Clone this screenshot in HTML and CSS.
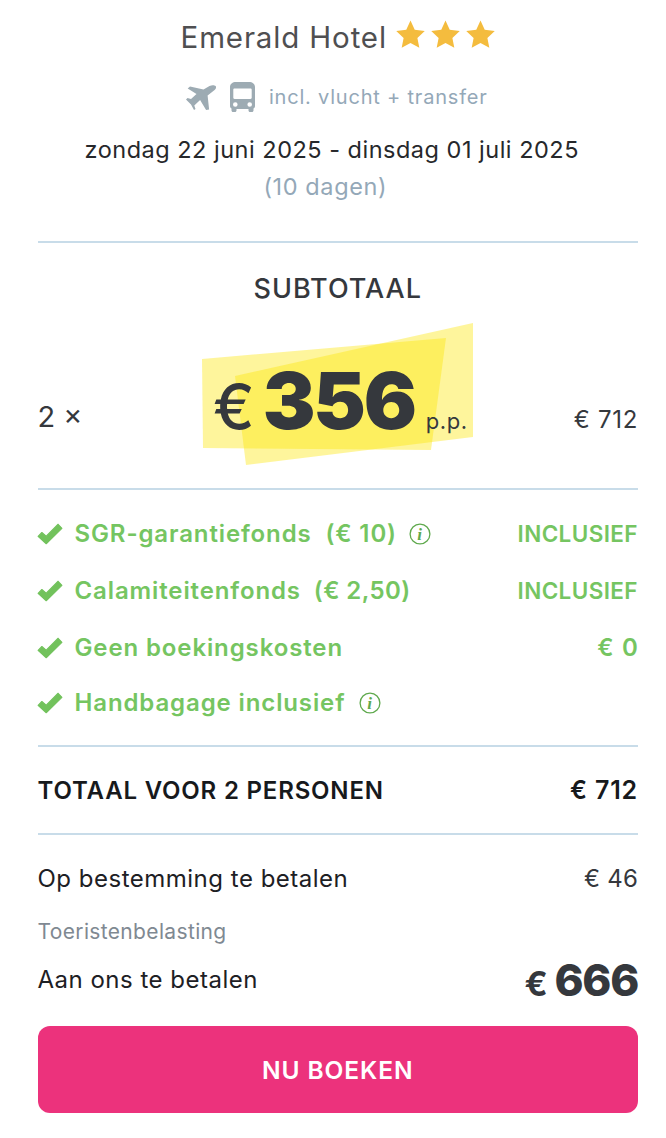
FILE: index.html
```html
<!DOCTYPE html>
<html lang="nl">
<head>
<meta charset="utf-8">
<title>Emerald Hotel</title>
<link rel="stylesheet" href="styles.css">
</head>
<body>
<main class="summary">
  <header class="head">
    <h1 class="hotel">
      <span>Emerald Hotel</span>
      <span class="stars">
        <svg class="star" viewBox="0 0 24 24"><path d="M12 .5l3.5 7.6 8.3 1-6.1 5.7 1.6 8.2L12 19l-7.3 4 1.6-8.2L.2 9.100l8.300-1z"/></svg>
        <svg class="star" viewBox="0 0 24 24"><path d="M12 .5l3.5 7.6 8.3 1-6.1 5.7 1.600 8.200L12 19l-7.300 4 1.600-8.200L.2 9.100l8.300-1z"/></svg>
        <svg class="star" viewBox="0 0 24 24"><path d="M12 .5l3.500 7.600 8.300 1-6.100 5.700 1.600 8.200L12 19l-7.300 4 1.600-8.200L.2 9.100l8.300-1z"/></svg>
      </span>
    </h1>
    <div class="transport">
      <svg class="plane" viewBox="0 0 30 25"><path d="M29.600 1c1 1.200.3 3-1 4l-7 5.500 1.500 14-3 .5-6-10-5.800 5.500 1.200 3.500L8 25l-3-5.500-5-5L1.500 13l3.500 1 5.500-5-8.800-5.500L4 1.500l13.500 3 6-3.500c2.200-1.200 5-1 6.100 0z"/></svg>
      <svg class="bus" viewBox="0 0 25 30"><path fill-rule="evenodd" d="M6 0h13c3.500 0 6 2 6 5v19c0 1.200-.5 2-1.500 2.500v2c0 .8-.7 1.500-1.500 1.500h-2c-.8 0-1.500-.7-1.500-1.500V27H6.500v1.500C6.500 29.300 5.800 30 5 30H3c-.8 0-1.500-.7-1.500-1.500v-2C.5 26 0 25.200 0 24V5C0 2 2.500 0 6 0zM4.500 6.500c-.7 0-1.200.5-1.200 1.200v8c0 .7.500 1.200 1.200 1.200h16c.7 0 1.200-.5 1.200-1.200v-8c0-.7-.5-1.200-1.200-1.200zM5.300 20.200a2.300 2.300 0 1 0 0 4.600 2.300 2.300 0 0 0 0-4.600zm14.400 0a2.300 2.300 0 1 0 0 4.600 2.300 2.300 0 0 0 0-4.600z"/></svg>
      <span>incl. vlucht + transfer</span>
    </div>
    <p class="dates">zondag 22 juni 2025 - dinsdag 01 juli 2025</p>
    <p class="days">(10 dagen)</p>
  </header>

  <section class="subtotal">
    <h2 class="sub-title">SUBTOTAAL</h2>
    <div class="price-row">
      <span class="qty">2 ×</span>
      <div class="price">
        <svg class="splash" viewBox="0 0 271 142">
          <polygon points="0,36 244,15 229,127 1,125"/>
          <polygon points="33,53 271,0 271,114 44,142"/>
        </svg>
        <span class="euro">€</span><span class="amount">356</span><span class="pp">p.p.</span>
      </div>
      <span class="line-total">€ 712</span>
    </div>
  </section>

  <ul class="perks">
    <li class="perk">
      <svg class="check" viewBox="0 0 24 20"><path d="M1 12.200 4.500 8.600 8.500 12 19.500 1 23 4.800 8.500 19z"/></svg>
      <span class="perk-name">SGR-garantiefonds&nbsp; (€ 10)</span>
      <svg class="info info-a" viewBox="0 0 22 22"><circle cx="11" cy="11" r="9.900"/><text x="11" y="16.500" text-anchor="middle">i</text></svg>
      <span class="perk-value">INCLUSIEF</span>
    </li>
    <li class="perk">
      <svg class="check" viewBox="0 0 24 20"><path d="M1 12.200 4.500 8.600 8.500 12 19.500 1 23 4.800 8.500 19z"/></svg>
      <span class="perk-name">Calamiteitenfonds&nbsp;<span class="perk-fee">(€ 2,50)</span></span>
      <span class="perk-value">INCLUSIEF</span>
    </li>
    <li class="perk">
      <svg class="check" viewBox="0 0 24 20"><path d="M1 12.200 4.500 8.600 8.500 12 19.500 1 23 4.800 8.500 19z"/></svg>
      <span class="perk-name">Geen boekingskosten</span>
      <span class="perk-value perk-zero">€ 0</span>
    </li>
    <li class="perk perk-last">
      <svg class="check" viewBox="0 0 24 20"><path d="M1 12.200 4.500 8.600 8.500 12 19.500 1 23 4.800 8.500 19z"/></svg>
      <span class="perk-name">Handbagage inclusief</span>
      <svg class="info info-b" viewBox="0 0 22 22"><circle cx="11" cy="11" r="9.900"/><text x="11" y="16.500" text-anchor="middle">i</text></svg>
    </li>
  </ul>

  <div class="total">
    <span>TOTAAL VOOR 2 PERSONEN</span>
    <span class="total-value">€ 712</span>
  </div>

  <section class="pay">
    <div class="pay-row">
      <span>Op bestemming te betalen</span>
      <span class="pay-local">€ 46</span>
    </div>
    <p class="tax">Toeristenbelasting</p>
    <div class="pay-row due">
      <span>Aan ons te betalen</span>
      <span class="due-price"><span class="due-euro">€</span> <span class="due-amount">666</span></span>
    </div>
    <button class="book" type="button">NU BOEKEN</button>
  </section>
</main>
</body>
</html>
```
FILE: styles.css
```css
* { box-sizing: border-box; }
html, body { margin: 0; padding: 0; background: #fff; }
body { font-family: Inter, "Liberation Sans", sans-serif; color: #1d2024; }
h1, h2, p, ul { margin: 0; padding: 0; }
.summary { width: 666px; height: 1138px; padding: 0 28px 0 37.500px; overflow: hidden; }

.head { height: 243px; border-bottom: 2px solid #c8dce9; text-align: center; padding-top: 15px; }
.hotel { display: flex; justify-content: center; align-items: center; gap: 9px; font-size: 29.500px; font-weight: 400; line-height: 44px; color: #4f4f51; letter-spacing: .85px; }
.stars { display: flex; gap: 6px; margin-top: -6px; }
.star { width: 29px; height: 29px; fill: #f4bc3e; display: block; }
.transport { display: flex; justify-content: center; align-items: center; margin-top: 23px; height: 30px; color: #94a8b8; font-size: 20px; letter-spacing: .8px; }
.plane { width: 30px; height: 25px; fill: #9dabb3; margin-right: 14px; margin-left: -2px; }
.bus { width: 25px; height: 30px; fill: #9dabb3; margin-right: 14px; }
.dates { margin-top: 21px; padding-right: 12px; font-size: 23.500px; line-height: 34px; letter-spacing: .5px; color: #26282b; }
.days { padding-right: 25px; font-size: 23.500px; line-height: 34px; color: #94a8b8; letter-spacing: .6px; margin-top: 3px; }

.subtotal { height: 247px; border-bottom: 2px solid #c8dce9; }
.sub-title { padding-top: 29px; font-size: 27px; line-height: 34px; font-weight: 500; text-align: center; color: #35383d; letter-spacing: 1px; }
.price-row { display: flex; align-items: center; justify-content: space-between; height: 142px; margin-top: 17px; position: relative; }
.qty { font-size: 29px; color: #35383d; margin-top: 44px; }
.line-total { font-size: 24px; color: #35383d; letter-spacing: .7px; margin-top: 50px; }
.price { position: absolute; left: 164.500px; top: 0; width: 271px; height: 142px; padding-top: 13px; display: flex; align-items: baseline; color: #35383d; }
.splash { position: absolute; inset: 0; width: 271px; height: 142px; }
.splash polygon { fill: #fde500; fill-opacity: .39; }
.euro, .amount, .pp { position: relative; }
.euro { font-size: 62px; font-weight: 500; margin-left: 11px; line-height: 142px; }
.amount { font-size: 79px; font-weight: 900; margin-left: 8px; letter-spacing: -2.200px; }
.pp { font-size: 22px; margin-left: 11px; letter-spacing: .5px; }

.perks { list-style: none; height: 257px; border-bottom: 2px solid #c8dce9; padding-top: 15px; }
.perk { display: flex; align-items: center; height: 57px; color: #75c561; font-size: 24px; font-weight: 600; letter-spacing: .88px; }
.perk-last { height: 53px; }
.perk-fee { letter-spacing: .4px; margin-left: 6px; }
.check { width: 26px; height: 22px; fill: #72c25c; stroke: #72c25c; stroke-width: 1; stroke-linejoin: round; margin-left: -1px; margin-right: 12px; flex: none; }
.perk-value { margin-left: auto; font-size: 22.500px; letter-spacing: .4px; }
.perk-zero { font-size: 24px; letter-spacing: 1.200px; margin-right: -1px; }
.info { width: 22px; height: 22px; flex: none; }
.info circle { fill: none; stroke: #5fa94d; stroke-width: 1.300; }
.info text { fill: #5fa94d; font-family: "Liberation Serif", serif; font-style: italic; font-weight: 700; font-size: 17px; }
.info-a { margin-left: 12px; }
.info-b { margin-left: 14px; }

.total { display: flex; justify-content: space-between; align-items: center; height: 88px; border-bottom: 2px solid #c8dce9; font-size: 24px; font-weight: 600; color: #17191c; letter-spacing: .82px; }
.total-value { font-size: 25px; }

.pay { padding-top: 27px; }
.pay-row { display: flex; justify-content: space-between; align-items: center; font-size: 24px; line-height: 34px; letter-spacing: .5px; color: #1d2024; }
.pay-local { color: #35383d; letter-spacing: .2px; }
.tax { margin-top: 21px; font-size: 21px; line-height: 30px; color: #7f8992; letter-spacing: .35px; }
.due { margin-top: 11px; height: 44px; }
.due-price { color: #35383d; font-weight: 700; padding-top: 8px; }
.due-euro { font-size: 34px; }
.due-amount { font-size: 44px; font-weight: 800; letter-spacing: -1.300px; }
.book { display: block; width: 100%; height: 87px; margin-top: 24px; border: 0; border-radius: 12px; background: #ec327c; color: #fff; font-family: inherit; font-size: 24.500px; font-weight: 600; letter-spacing: .9px; }
```
